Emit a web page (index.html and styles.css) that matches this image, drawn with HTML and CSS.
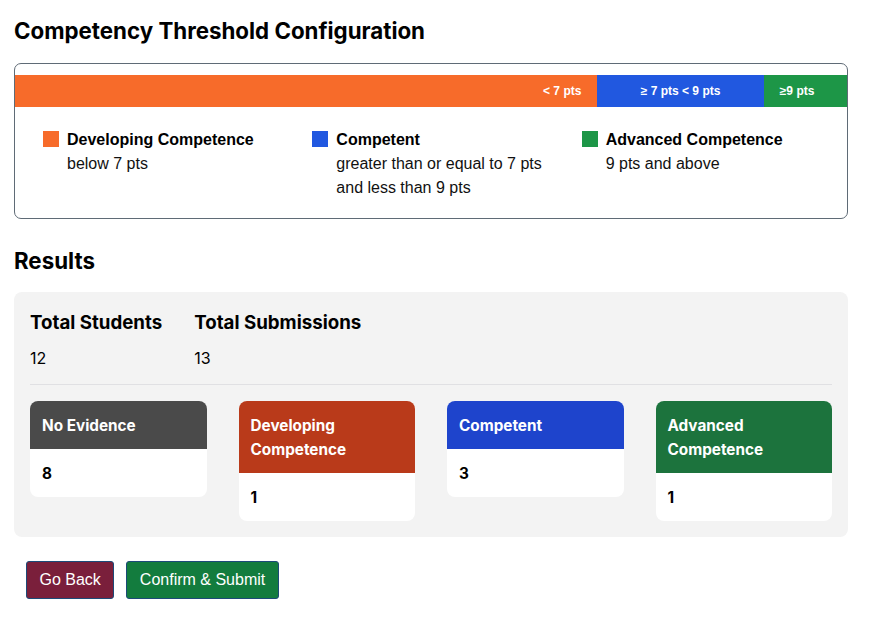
FILE: index.html
```html
<!DOCTYPE html>
<html>
<head>
<meta charset="utf-8">
<link rel="stylesheet" href="styles.css">
</head>
<body>
<main class="page">
  <h1 class="title">Competency Threshold Configuration</h1>
  <section class="config">
    <div class="bar">
      <div class="seg seg-dev" style="width:70%"><span>&lt; 7 pts</span></div>
      <div class="seg seg-comp" style="width:20%"><span>≥ 7 pts &lt; 9 pts</span></div>
      <div class="seg seg-adv" style="width:10%"><span>≥9 pts</span></div>
    </div>
    <div class="legend">
      <div class="legend-item">
        <span class="swatch sw-dev"></span>
        <div class="legend-text">
          <div class="legend-name">Developing Competence</div>
          <div class="legend-desc">below 7 pts</div>
        </div>
      </div>
      <div class="legend-item">
        <span class="swatch sw-comp"></span>
        <div class="legend-text">
          <div class="legend-name">Competent</div>
          <div class="legend-desc">greater than or equal to 7 pts and less than 9 pts</div>
        </div>
      </div>
      <div class="legend-item">
        <span class="swatch sw-adv"></span>
        <div class="legend-text">
          <div class="legend-name">Advanced Competence</div>
          <div class="legend-desc">9 pts and above</div>
        </div>
      </div>
    </div>
  </section>

  <h2 class="subtitle">Results</h2>
  <section class="results">
    <div class="stats">
      <div class="stat">
        <div class="stat-label">Total Students</div>
        <div class="stat-value">12</div>
      </div>
      <div class="stat">
        <div class="stat-label">Total Submissions</div>
        <div class="stat-value">13</div>
      </div>
    </div>
    <hr class="divider">
    <div class="cards">
      <div class="card">
        <div class="card-head head-none">No Evidence</div>
        <div class="card-body">8</div>
      </div>
      <div class="card">
        <div class="card-head head-dev">Developing Competence</div>
        <div class="card-body">1</div>
      </div>
      <div class="card">
        <div class="card-head head-comp">Competent</div>
        <div class="card-body">3</div>
      </div>
      <div class="card">
        <div class="card-head head-adv">Advanced Competence</div>
        <div class="card-body">1</div>
      </div>
    </div>
  </section>

  <div class="actions">
    <button class="btn btn-back">Go Back</button>
    <button class="btn btn-submit">Confirm &amp; Submit</button>
  </div>
</main>
</body>
</html>
```

FILE: styles.css
```css
* { box-sizing: border-box; }

body {
  margin: 0;
  background: #ffffff;
  color: #000;
  font-family: "Liberation Sans", Arial, sans-serif;
}

.page {
  width: 834px;
  margin: 0 0 0 14px;
  padding-top: 17px;
}

.title {
  margin: 0 0 18px;
  font-family: Inter, "Liberation Sans", sans-serif;
  font-size: 22.3px;
  line-height: 28px;
  font-weight: 700;
}

.config {
  border: 1px solid #5f6b76;
  border-radius: 7px;
  padding: 11px 0 18px;
}

.bar {
  display: flex;
  height: 32px;
}

.seg {
  display: flex;
  align-items: center;
  color: #fff;
  font-size: 12px;
  font-weight: 700;
  padding: 0 16px;
}

.seg-dev { background: #f76b2a; justify-content: flex-end; }
.seg-comp { background: #2158e0; justify-content: center; }
.seg-adv { background: #1d9647; justify-content: flex-start; }

.legend {
  display: grid;
  grid-template-columns: repeat(3, 1fr);
  column-gap: 32px;
  padding: 21px 28px 0;
}

.legend-item {
  display: flex;
  gap: 8px;
  align-items: flex-start;
}

.swatch {
  flex: none;
  width: 16px;
  height: 16px;
  margin-top: 3px;
}

.sw-dev { background: #f76b2a; }
.sw-comp { background: #2158e0; }
.sw-adv { background: #1d9647; }

.legend-name {
  font-size: 16px;
  line-height: 24px;
  font-weight: 700;
}

.legend-desc {
  font-size: 16px;
  line-height: 24px;
  color: #111;
}

.subtitle {
  margin: 28px 0 17px;
  font-family: Inter, "Liberation Sans", sans-serif;
  font-size: 22.3px;
  line-height: 28px;
  font-weight: 700;
}

.results {
  background: #f3f3f3;
  border-radius: 8px;
  padding: 17px 16px 16px;
}

.stats {
  display: flex;
  gap: 32px;
}

.stat-label {
  font-family: Inter, "Liberation Sans", sans-serif;
  font-size: 18.7px;
  line-height: 28px;
  font-weight: 700;
}

.stat-value {
  margin-top: 9px;
  font-family: Inter, "Liberation Sans", sans-serif;
  font-size: 16px;
  line-height: 24px;
}

.divider {
  border: 0;
  border-top: 1px solid #e0e0e3;
  margin: 14px 0 16px;
}

.cards {
  display: grid;
  grid-template-columns: repeat(4, 1fr);
  column-gap: 32px;
  align-items: start;
}

.card {
  background: #fff;
  border-radius: 8px;
  overflow: hidden;
}

.card-head {
  padding: 13px 12px 11px;
  color: #fff;
  font-family: Inter, "Liberation Sans", sans-serif;
  font-size: 15.3px;
  line-height: 24px;
  font-weight: 700;
}

.head-none { background: #4a4a4a; }
.head-dev { background: #b93a1a; }
.head-comp { background: #1e44cc; }
.head-adv { background: #1c733d; }

.card-body {
  padding: 13px 12px 11px;
  font-family: Inter, "Liberation Sans", sans-serif;
  font-size: 15.3px;
  line-height: 24px;
  font-weight: 700;
}

.actions {
  display: flex;
  gap: 12px;
  margin: 24px 0 0 12px;
}

.btn {
  font-family: "Liberation Sans", Arial, sans-serif;
  font-size: 16px;
  line-height: 20px;
  padding: 8px 12.5px;
  color: #fff;
  border: 1px solid #1c4a78;
  border-radius: 3px;
}

.btn-back { background: #7a1f3b; }
.btn-submit { background: #137c3e; }
```
